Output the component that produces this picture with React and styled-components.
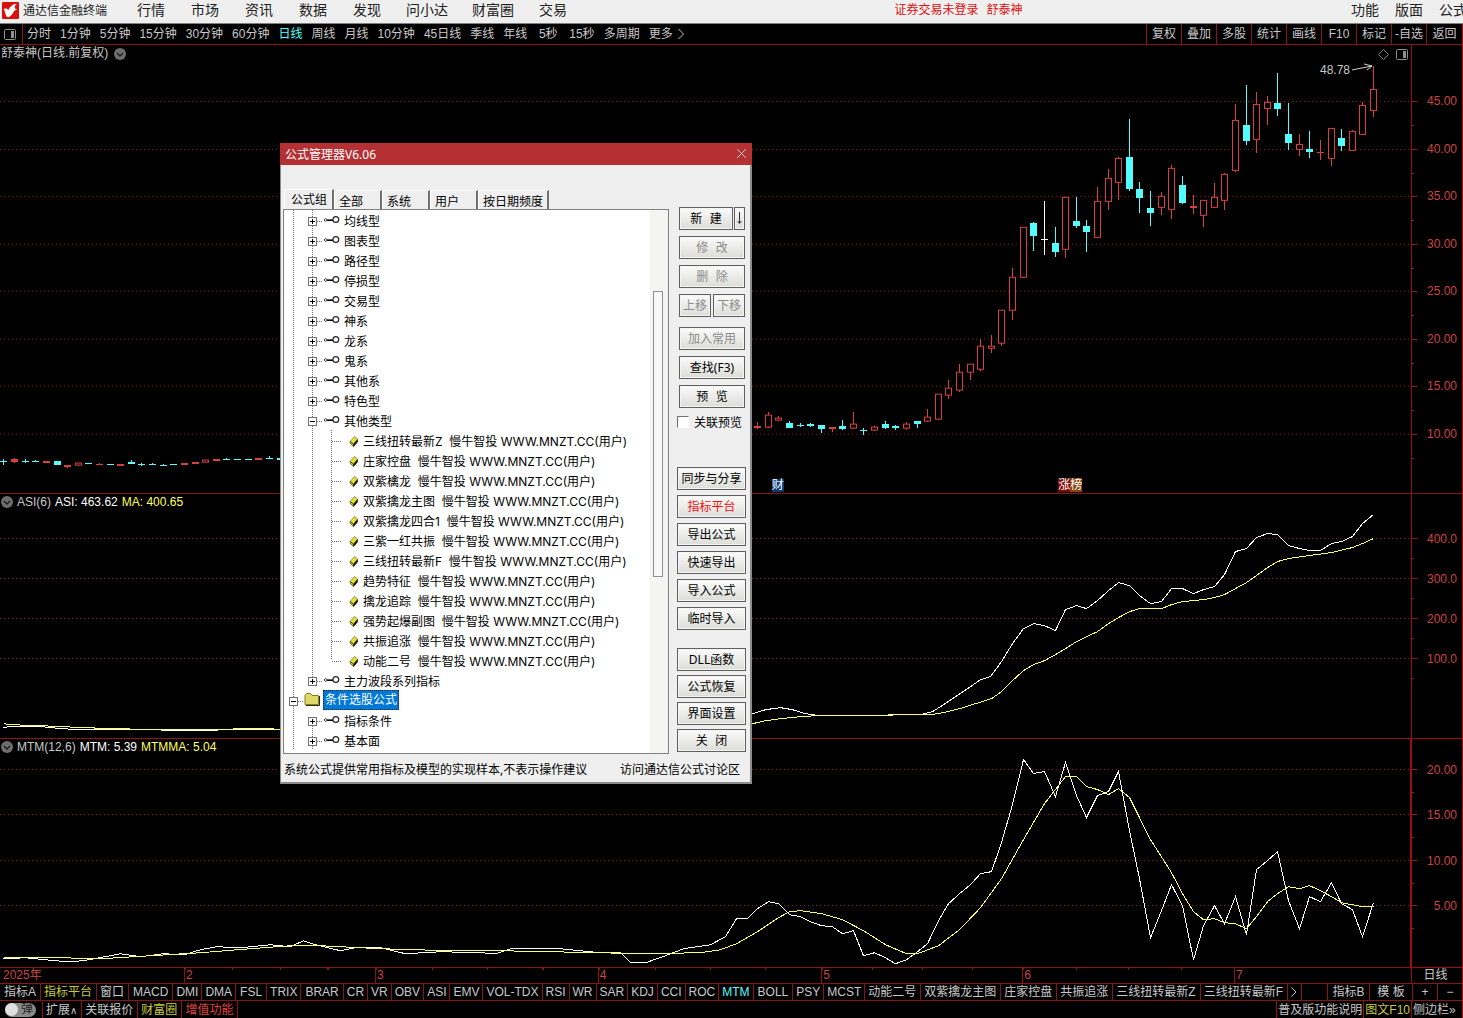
import { useState } from 'react';
import styled, { createGlobalStyle, css } from 'styled-components';

const menus = ['行情', '市场', '资讯', '数据', '发现', '问小达', '财富圈', '交易'];
const rightMenus = ['功能', '版面', '公式'];

const periods = [
  '分时', '1分钟', '5分钟', '15分钟', '30分钟', '60分钟', '日线', '周线', '月线',
  '10分钟', '45日线', '季线', '年线', '5秒', '15秒', '多周期', '更多',
];
const tools = ['复权', '叠加', '多股', '统计', '画线', 'F10', '标记', '-自选', '返回'];

const months = [
  { label: '2025年', days: 183 },
  { label: '2', days: 191, ticks: true },
  { label: '3', days: 223, ticks: true },
  { label: '4', days: 224, ticks: true },
  { label: '5', days: 201, ticks: true },
  { label: '6', days: 212, ticks: true },
  { label: '7', days: 177 },
];

const indicators = [
  'MACD', 'DMI', 'DMA', 'FSL', 'TRIX', 'BRAR', 'CR', 'VR', 'OBV', 'ASI', 'EMV',
  'VOL-TDX', 'RSI', 'WR', 'SAR', 'KDJ', 'CCI', 'ROC', 'MTM', 'BOLL', 'PSY', 'MCST',
];
const roomy = ['MACD', 'FSL', 'BRAR', 'BOLL'];
const customIndicators = ['动能二号', '双紫擒龙主图', '庄家控盘', '共振追涨', '三线扭转最新Z', '三线扭转最新F'];

// x, high, low, body top, body bottom, kind (r hollow, f filled red, c cyan, w white)
const candles = [
  [3, 459, 465, 461, 462, 'c'], [14, 458, 463, 459, 462, 'f'], [25, 459, 463, 461, 462, 'c'],
  [35, 460, 462, 461, 462, 'c'], [46, 461, 463, 461, 463, 'f'], [57, 461, 465, 461, 465, 'c'],
  [67, 465, 468, 465, 467, 'f'], [78, 463, 466, 463, 466, 'r'], [88, 463, 464, 463, 464, 'c'],
  [99, 463, 465, 464, 465, 'f'], [110, 464, 465, 464, 465, 'c'], [120, 464, 466, 464, 466, 'f'],
  [131, 460, 464, 462, 464, 'c'], [141, 463, 466, 464, 465, 'c'], [152, 463, 465, 464, 465, 'c'],
  [163, 464, 466, 465, 466, 'c'], [173, 464, 465, 464, 465, 'c'], [184, 463, 465, 463, 465, 'f'],
  [195, 462, 464, 462, 464, 'f'], [205, 460, 463, 460, 463, 'r'], [216, 459, 461, 459, 461, 'f'],
  [226, 458, 460, 459, 460, 'c'], [237, 459, 460, 459, 460, 'c'], [248, 459, 460, 459, 460, 'c'],
  [258, 458, 460, 458, 460, 'f'], [269, 456, 459, 458, 459, 'c'], [280, 458, 460, 458, 460, 'c'],
  [757, 422, 429, 426, 428, 'f'], [768, 412, 428, 415, 428, 'r'], [778, 416, 421, 418, 421, 'r'],
  [789, 421, 428, 423, 428, 'c'], [800, 423, 427, 425, 426, 'c'], [810, 423, 427, 424, 426, 'c'],
  [821, 425, 433, 425, 429, 'c'], [832, 427, 432, 427, 429, 'f'], [842, 420, 430, 426, 429, 'c'],
  [853, 412, 429, 424, 429, 'r'], [863, 428, 435, 430, 431, 'c'], [874, 426, 431, 427, 431, 'r'],
  [885, 421, 429, 424, 428, 'c'], [895, 425, 430, 426, 428, 'c'], [906, 422, 430, 424, 429, 'r'],
  [917, 421, 428, 421, 424, 'c'], [927, 409, 422, 417, 422, 'r'], [938, 394, 420, 394, 420, 'r'],
  [948, 380, 399, 388, 396, 'r'], [959, 364, 392, 372, 391, 'r'], [970, 364, 380, 364, 373, 'r'],
  [980, 339, 371, 346, 370, 'r'], [991, 335, 353, 346, 349, 'r'], [1001, 310, 346, 310, 344, 'r'],
  [1012, 268, 320, 277, 311, 'r'], [1023, 227, 278, 227, 278, 'r'], [1033, 222, 251, 223, 236, 'c'],
  [1044, 201, 255, 239, 240, 'w'], [1055, 227, 257, 243, 252, 'c'], [1065, 197, 258, 197, 250, 'r'],
  [1076, 197, 228, 221, 226, 'c'], [1086, 220, 252, 226, 232, 'c'], [1097, 187, 238, 201, 238, 'r'],
  [1108, 169, 210, 178, 202, 'r'], [1118, 157, 200, 158, 183, 'r'], [1129, 119, 191, 157, 189, 'c'],
  [1139, 182, 213, 189, 198, 'c'], [1150, 191, 226, 208, 213, 'c'], [1161, 192, 215, 196, 208, 'r'],
  [1171, 165, 219, 168, 210, 'r'], [1182, 176, 204, 185, 203, 'c'], [1193, 195, 214, 206, 208, 'f'],
  [1203, 200, 227, 200, 216, 'r'], [1214, 183, 208, 197, 208, 'r'], [1224, 173, 210, 174, 201, 'r'],
  [1235, 104, 172, 120, 171, 'r'], [1246, 85, 145, 125, 141, 'c'], [1256, 92, 153, 104, 140, 'r'],
  [1267, 96, 125, 102, 109, 'r'], [1277, 73, 116, 103, 109, 'c'], [1288, 103, 150, 134, 143, 'c'],
  [1299, 134, 156, 144, 150, 'r'], [1309, 131, 158, 149, 152, 'c'], [1320, 140, 160, 152, 153, 'f'],
  [1331, 128, 166, 128, 159, 'r'], [1341, 129, 151, 138, 146, 'c'], [1352, 130, 151, 131, 151, 'r'],
  [1362, 102, 135, 105, 135, 'r'], [1373, 66, 117, 89, 111, 'r'],
];

const asiLine =
  '3,727 8,726 41,726 62,728 80,729 147,729 190,730 230,729 280,729 752,713 765,709 780,707 792,709 805,713 820,715 920,714 932,711 943,704 955,696 970,686 980,679 990,676 1001,661 1012,643 1023,628 1033,623 1044,625 1055,630 1065,609 1076,605 1086,608 1097,600 1108,590 1118,582 1129,585 1139,595 1150,603 1161,601 1171,588 1182,588 1193,593 1203,589 1214,586 1224,574 1235,551 1246,548 1256,537 1267,533 1277,534 1288,545 1299,548 1309,550 1320,550 1331,543 1341,541 1352,536 1362,523 1373,514';
const asiAvg =
  '3,723 10,724 41,725 84,727 116,728 158,729 210,729 243,728 270,728 280,729 752,723 765,720 780,718 800,716 815,715 930,714 943,712 959,708 975,703 991,698 1001,691 1012,680 1023,670 1033,664 1044,660 1055,654 1065,648 1076,641 1086,636 1097,631 1108,623 1118,617 1129,611 1139,608 1161,608 1171,604 1182,601 1203,599 1214,597 1224,594 1235,588 1246,582 1256,575 1267,567 1277,561 1288,558 1309,555 1331,552 1352,547 1362,543 1373,538';
const mtmLine =
  '3,958 25,957 45,959 67,961 83,960 99,957 120,953 140,956 163,953 184,954 200,949 216,946 240,947 270,944 290,946 303,940 315,944 340,950 355,947 380,947 405,953 440,951 480,952 495,953 510,948 560,948 600,952 620,952 630,962 645,962 665,955 683,948 710,944 725,936 736,918 747,918 757,908 768,901 778,903 789,914 800,916 810,921 821,925 832,926 842,933 853,930 863,955 874,952 885,957 895,963 906,959 917,951 927,943 938,920 948,903 959,893 970,884 980,873 991,871 1001,842 1012,804 1023,759 1033,773 1044,771 1055,796 1065,762 1076,795 1086,817 1097,795 1108,791 1118,771 1129,830 1139,878 1150,937 1161,910 1171,884 1182,905 1193,959 1203,925 1214,905 1224,923 1235,896 1246,934 1256,869 1267,860 1277,851 1288,900 1299,928 1309,896 1320,901 1331,882 1341,903 1352,909 1362,936 1373,902';
const mtmAvg =
  '3,957 60,957 100,958 150,955 200,952 250,948 290,945 320,945 380,948 450,950 500,950 600,952 640,953 700,952 720,949 736,943 757,931 778,917 789,911 800,910 821,913 842,919 863,930 885,944 906,953 917,953 938,945 959,929 980,907 1001,878 1023,839 1044,803 1065,776 1076,776 1086,786 1097,789 1108,794 1118,788 1129,797 1139,817 1150,839 1171,872 1182,893 1193,911 1203,919 1214,918 1224,922 1235,923 1246,928 1256,916 1267,901 1277,893 1288,886 1299,888 1309,885 1320,890 1331,896 1341,902 1362,906 1373,906';

const priceTicks = [
  [101, '45.00'], [149, '40.00'], [196, '35.00'], [244, '30.00'],
  [291, '25.00'], [339, '20.00'], [386, '15.00'], [434, '10.00'],
];
const asiTicks = [[538, '400.0'], [578, '300.0'], [618, '200.0'], [658, '100.0']];
const mtmTicks = [[769, '20.00'], [814, '15.00'], [860, '10.00'], [905, '5.00']];

const tabs = ['公式组', '全部', '系统', '用户', '按日期频度'];
const groups = [
  '均线型', '图表型', '路径型', '停损型', '交易型', '神系', '龙系', '鬼系', '其他系', '特色型',
];
const formulas = [
  '三线扭转最新Z', '庄家控盘', '双紫檎龙', '双紫擒龙主图', '双紫擒龙四合1', '三紫一红共振',
  '三线扭转最新F', '趋势特征', '擒龙追踪', '强势起爆副图', '共振追涨', '动能二号',
];

export default function App() {
  return (
    <>
      <GlobalStyle />
      <Screen>
        <MenuBar>
          <Logo />
          <Brand>通达信金融终端</Brand>
          {menus.map((m) => (
            <MenuItem key={m} $wide={m.length > 2}>{m}</MenuItem>
          ))}
          <Notice>
            <span>证券交易未登录</span>
            <span>舒泰神</span>
          </Notice>
          <RightMenus>
            {rightMenus.map((m) => (
              <RightMenu key={m}>{m}</RightMenu>
            ))}
          </RightMenus>
        </MenuBar>
        <Workspace>
          <PeriodBar />
          <Panel $weight={449}>
            <Plot>
              <Chart viewBox="0 45 1411 448">
                <Grid ticks={priceTicks} />
                {candles.map((c) => (
                  <Candle key={c[0]} data={c} />
                ))}
                <path d="M1352 70 L1372 66 M1364 64 L1372 66 L1367 70" stroke="#d0d0d0" fill="none" />
              </Chart>
              <PlotTitle $gap={6}>
                舒泰神(日线.前复权)
                <ChevronDot />
              </PlotTitle>
              <PlotTools>
                <svg width="11" height="11" viewBox="0 0 11 11">
                  <path d="M5.5 .5 10.5 5.5 5.5 10.5 .5 5.5Z" fill="none" stroke="#808080" />
                </svg>
                <SideIcon />
              </PlotTools>
              <PeakPrice>48.78</PeakPrice>
              <Mark $at="54.7%" $bg="#0c3c74">财</Mark>
              <Mark $at="75%" $bg="#7c0808">
                涨<Rank>榜</Rank>
              </Mark>
            </Plot>
            <Axis ticks={priceTicks} top={45} height={448} />
          </Panel>
          <Panel $weight={245}>
            <Plot>
              <Chart viewBox="0 494 1411 244">
                <Grid ticks={asiTicks} />
                <Line points={asiLine} stroke="#fff" />
                <Line points={asiAvg} stroke="#ffff60" />
              </Chart>
              <PlotTitle $gap={4}>
                <ChevronDot />
                ASI(6)
                <White>ASI: 463.62</White>
                <Yellow>MA: 400.65</Yellow>
              </PlotTitle>
            </Plot>
            <Axis ticks={asiTicks} top={494} height={244} />
          </Panel>
          <Panel $weight={229}>
            <Plot>
              <Chart viewBox="0 739 1411 228">
                <Grid ticks={mtmTicks} />
                <Line points={mtmLine} stroke="#fff" />
                <Line points={mtmAvg} stroke="#ffff60" />
              </Chart>
              <PlotTitle $gap={4}>
                <ChevronDot />
                MTM(12,6)
                <White>MTM: 5.39</White>
                <Yellow>MTMMA: 5.04</Yellow>
              </PlotTitle>
            </Plot>
            <Axis ticks={mtmTicks} top={739} height={228} active />
          </Panel>
          <TimeAxis>
            <Months>
              {months.map((m) => (
                <Month key={m.label} $days={m.days} $ticks={m.ticks}>{m.label}</Month>
              ))}
            </Months>
            <PeriodName>日线</PeriodName>
          </TimeAxis>
          <IndicatorBar />
          <StatusBar>
            <ToggleCell>
              <Toggle>
                <Knob />弹
              </Toggle>
            </ToggleCell>
            <StatusItem>扩展<Caret>∧</Caret></StatusItem>
            <StatusItem>关联报价</StatusItem>
            <StatusItem $color="#c8c83c">财富圈</StatusItem>
            <StatusItem $color="#e04040">增值功能</StatusItem>
            <Fill />
            <StatusItem $tight>普及版功能说明</StatusItem>
            <StatusItem $tight $color="#c8c83c">图文F10</StatusItem>
            <SideToggle>侧边栏»</SideToggle>
          </StatusBar>
        </Workspace>
        <FormulaManager />
      </Screen>
    </>
  );
}

function Logo() {
  return (
    <svg width="18" height="18" viewBox="0 0 18 18">
      <rect x="0" y="0" width="17" height="17" rx="1" fill="#d8100c" />
      <path d="M1.500 7C3.500 6 5.500 6.500 6.300 8.200C8 4 11 2.200 15 1.800C12.500 3.500 12 5.500 13.500 7L15.200 7.600C10.500 8.500 11.500 13.500 6.500 15.200C3 15 3.800 9.500 1.500 7Z" fill="#fff" />
    </svg>
  );
}

function SideIcon() {
  return (
    <svg width="12" height="11" viewBox="0 0 12 11">
      <rect x="0.5" y="0.5" width="11" height="10" rx="1" fill="none" stroke="#909090" />
      <rect x="7" y="2" width="3" height="7" fill="#909090" />
    </svg>
  );
}

function ChevronDot() {
  return (
    <svg width="12" height="12" viewBox="0 0 12 12">
      <circle cx="6" cy="6" r="6" fill="#6e6e6e" />
      <path d="M3 5 6 8 9 5" fill="none" stroke="#1c1c1c" strokeWidth="1.4" />
    </svg>
  );
}

function PeriodBar() {
  const [period, setPeriod] = useState('日线');
  return (
    <Toolbar>
      <LayoutButton aria-label="布局">
        <SideIcon />
      </LayoutButton>
      <Periods>
        {periods.map((p) => (
          <Period key={p} $active={p === period} onClick={() => setPeriod(p)}>{p}</Period>
        ))}
        <svg width="8" height="12" viewBox="0 0 8 12">
          <path d="M1.500 1 6.500 6 1.500 11" fill="none" stroke="#c0c0c0" />
        </svg>
      </Periods>
      {tools.map((t) => (
        <Tool key={t}>{t}</Tool>
      ))}
    </Toolbar>
  );
}

function Grid({ ticks }) {
  return ticks.map(([y]) => (
    <line key={y} x1="0" x2="1411" y1={y + 0.5} y2={y + 0.5} stroke="#901818" strokeDasharray="1 3" />
  ));
}

function Line({ points, stroke }) {
  return <polyline points={points} fill="none" stroke={stroke} transform="translate(0.5 0.5)" />;
}

function Candle({ data }) {
  const [x, high, low, top, bottom, kind] = data;
  const color = { r: '#d84040', f: '#d84040', c: '#54fcfc', w: '#fff' }[kind];
  const height = bottom - top;
  return (
    <g fill={color}>
      <rect x={x} y={high} width="1" height={low - high} />
      {kind === 'r' ? (
        <rect x={x - 2.5} y={top + 0.5} width="6" height={height - 1} fill="#000" stroke={color} />
      ) : (
        <rect x={x - 3} y={top} width="7" height={height} />
      )}
    </g>
  );
}

function Axis({ ticks, top, height, active }) {
  const pct = (y) => `${((y - top + 0.5) / height) * 100}%`;
  const half = (ticks[1][0] - ticks[0][0]) / 2;
  return (
    <AxisBox $active={active}>
      <AxisScale>
        {ticks.map(([y, label]) => (
          <g key={y}>
            <line x1="0" x2="5" y1={pct(y)} y2={pct(y)} stroke="#a01818" />
            <line x1="0" x2="2" y1={pct(y + half)} y2={pct(y + half)} stroke="#a01818" />
            <text x="45" y={pct(y)} dy="4" textAnchor="end">{label}</text>
          </g>
        ))}
      </AxisScale>
    </AxisBox>
  );
}

function IndicatorBar() {
  const [current, setCurrent] = useState('MTM');
  return (
    <Indicators>
      <Indicator $zh $roomy>指标A</Indicator>
      <Indicator $zh $color="#c8c83c">指标平台</Indicator>
      <Indicator $zh>窗口</Indicator>
      {indicators.map((name) => (
        <Indicator
          key={name}
          $roomy={roomy.includes(name)}
          $color={name === current ? '#54fcfc' : undefined}
          onClick={() => setCurrent(name)}
        >
          {name}
        </Indicator>
      ))}
      {customIndicators.map((name) => (
        <Indicator key={name} $zh>{name}</Indicator>
      ))}
      <Indicator $zh aria-label="更多指标">
        <svg width="6" height="10" viewBox="0 0 6 10">
          <path d="M.5 .5 5 5 .5 9.500" fill="none" stroke="#c0c0c0" />
        </svg>
      </Indicator>
      <Fill />
      <EndCell $w={42}>指标B</EndCell>
      <EndCell $w={43}>模 板</EndCell>
      <EndCell $w={25}>+</EndCell>
      <EndCell $w={25}>−</EndCell>
    </Indicators>
  );
}

function Guide({ box, up = true, down = true, elbow }) {
  return (
    <GuideCell viewBox="0 0 19 20">
      <g stroke="#707070" strokeDasharray="1 1">
        {up && <path d="M9.500 0V10" />}
        {down && <path d="M9.500 10V20" />}
        {(box || elbow) && <path d="M10 11.500H19" />}
      </g>
      {box && (
        <g stroke="#000">
          <rect x="5.500" y="7.500" width="8" height="8" fill="#fff" stroke="#707070" />
          <path d="M7 11.500H12" />
          {box === '+' && <path d="M9.500 9V14" />}
        </g>
      )}
    </GuideCell>
  );
}

function Group({ name, open, first, last }) {
  return (
    <TreeRow role="treeitem" aria-expanded={!!open}>
      <Guide />
      <Guide box={open ? '-' : '+'} up={!first} down={!last} />
      <NodeIcon viewBox="0 0 22 20">
        <path d="M5 10.200H11" stroke="#000" strokeWidth="1.600" />
        <circle cx="3.700" cy="10" r="1.300" fill="#fff" stroke="#444" />
        <circle cx="13.800" cy="9.500" r="2.900" fill="#fff" stroke="#222" strokeWidth="1.200" />
      </NodeIcon>
      {name}
    </TreeRow>
  );
}

function Formula({ name, last }) {
  return (
    <TreeRow role="treeitem">
      <Guide />
      <Guide />
      <Guide elbow down={!last} />
      <NodeIcon viewBox="0 0 22 20">
        <path d="M9.200 11.500 13.500 6.500 16.500 9 12.500 14Z" fill="#e8e040" stroke="#707010" strokeWidth="0.700" />
        <path d="M9.200 11.500 12.500 14 12.500 16.500 9.200 13.500Z" fill="#c8c030" stroke="#404000" strokeWidth="0.700" />
        <path d="M12.500 14 16.800 9V12L12.500 17Z" fill="#101000" />
      </NodeIcon>
      {`${name}  慢牛智投 WWW.MNZT.CC(用户)`}
    </TreeRow>
  );
}

function FormulaManager() {
  const [tab, setTab] = useState('公式组');
  return (
    <Dialog role="dialog" aria-label="公式管理器">
      <TitleBar>
        公式管理器V6.06
        <CloseButton aria-label="关闭窗口">
          <svg width="11" height="11" viewBox="0 0 11 11">
            <path d="M1 1 10 10M10 1 1 10" stroke="#f0d0d0" />
          </svg>
        </CloseButton>
      </TitleBar>
      <DialogBody>
        <Browser>
          <Tabs role="tablist">
            {tabs.map((t) => (
              <Tab key={t} role="tab" $active={t === tab} onClick={() => setTab(t)}>{t}</Tab>
            ))}
          </Tabs>
          <TreeBox>
            <Tree role="tree">
              {groups.map((g) => (
                <Group key={g} name={g} />
              ))}
              <Group name="其他类型" open />
              {formulas.map((f, i) => (
                <Formula key={f} name={f} last={i === formulas.length - 1} />
              ))}
              <Group name="主力波段系列指标" last />
              <TreeRow role="treeitem" aria-expanded>
                <Guide box="-" />
                <FolderIcon viewBox="0 0 19 20">
                  <path d="M2 5.500 3.500 3.500H7.500L9 5.500H15.500V14.500H2Z" fill="#e0d868" stroke="#808020" />
                  <path d="M3 15.500H16.500V6" fill="none" stroke="#303010" />
                </FolderIcon>
                <Selected>条件选股公式</Selected>
              </TreeRow>
              <Group name="指标条件" first />
              <Group name="基本面" />
            </Tree>
            <Scrollbar>
              <Thumb />
            </Scrollbar>
          </TreeBox>
        </Browser>
        <Actions>
          <ButtonGroup $gap={6}>
            <Pair>
              <WinButton $spaced>新  建</WinButton>
              <DropButton aria-label="更多新建">
                <svg width="7" height="13" viewBox="0 0 7 13">
                  <path d="M3.500 0V11M1.500 9 3.500 11.500 5.500 9" fill="none" stroke="#333" />
                </svg>
              </DropButton>
            </Pair>
            <WinButton $spaced disabled>修  改</WinButton>
            <WinButton $spaced disabled>删  除</WinButton>
            <Pair $gap={2}>
              <WinButton disabled>上移</WinButton>
              <WinButton disabled>下移</WinButton>
            </Pair>
          </ButtonGroup>
          <ButtonGroup $gap={6} $top={10}>
            <WinButton disabled>加入常用</WinButton>
            <WinButton>查找(F3)</WinButton>
            <WinButton $spaced>预  览</WinButton>
          </ButtonGroup>
          <CheckLabel>
            <Check type="checkbox" />
            关联预览
          </CheckLabel>
          <Fill />
          <ButtonGroup $gap={5} $wide>
            <WinButton>同步与分享</WinButton>
            <WinButton $red>指标平台</WinButton>
            <WinButton>导出公式</WinButton>
            <WinButton>快速导出</WinButton>
            <WinButton>导入公式</WinButton>
            <WinButton>临时导入</WinButton>
          </ButtonGroup>
          <ButtonGroup $gap={4} $top={18} $wide>
            <WinButton>DLL函数</WinButton>
            <WinButton>公式恢复</WinButton>
            <WinButton>界面设置</WinButton>
            <WinButton $spaced>关  闭</WinButton>
          </ButtonGroup>
        </Actions>
      </DialogBody>
      <DialogFooter>
        <span>系统公式提供常用指标及模型的实现样本,不表示操作建议</span>
        <ForumLink href="#forum">访问通达信公式讨论区</ForumLink>
      </DialogFooter>
    </Dialog>
  );
}

const GlobalStyle = createGlobalStyle`
  * {
    box-sizing: border-box;
  }

  body {
    margin: 0;
    background: #000;
    font: 12px/15px 'Liberation Sans', 'Noto Sans CJK SC', sans-serif;
  }

  button, input {
    font: inherit;
    color: inherit;
    margin: 0;
  }

  button {
    border: 0;
    padding: 0;
    background: none;
    white-space: pre;
  }

  svg {
    flex: none;
    display: block;
  }
`;

const line = '1px solid #8c1414';

const Screen = styled.div`
  position: relative;
  display: flex;
  flex-direction: column;
  height: 100vh;
  overflow: hidden;
  color: #c8c8c8;
`;

const MenuBar = styled.header`
  flex: none;
  display: flex;
  align-items: center;
  height: 24px;
  padding: 0 0 2px 2px;
  overflow: hidden;
  background: #efefef;
  border-bottom: 1px solid #808080;
  color: #222;
`;

const Brand = styled.span`
  width: 104px;
  padding: 2px 0 0 3px;
  white-space: nowrap;
`;

const MenuItem = styled.button`
  flex: none;
  width: ${(p) => (p.$wide ? 66 : 54)}px;
  font-size: 14px;
`;

const Notice = styled.div`
  flex: 1;
  display: flex;
  justify-content: center;
  gap: 8px;
  padding-right: 14px;
  color: #e01010;
  white-space: nowrap;
`;

const RightMenus = styled.nav`
  flex: none;
  display: flex;
  gap: 16px;
  width: 112px;
`;

const RightMenu = styled.button`
  flex: none;
  font-size: 14px;
`;

const Workspace = styled.main`
  flex: 1;
  min-height: 0;
  display: flex;
  flex-direction: column;
  border-right: 1px solid #b40808;
`;

const Toolbar = styled.div`
  flex: none;
  display: flex;
  height: 21px;
  border-bottom: ${line};
`;

const LayoutButton = styled.button`
  width: 23px;
  padding-left: 4px;
  border-right: ${line};
`;

const Periods = styled.div`
  flex: 1;
  display: flex;
  align-items: center;
  gap: 9px;
  padding-left: 4px;

  svg {
    margin-left: -5px;
  }
`;

const Period = styled.button`
  min-width: 24px;
  color: ${(p) => (p.$active ? '#54fcfc' : '#c8c8c8')};
`;

const Tool = styled.button`
  width: 35px;
  border-left: ${line};

  &:last-child {
    width: 36px;
  }
`;

const Panel = styled.section`
  flex: ${(p) => p.$weight} 1 0;
  min-height: 0;
  display: flex;
  border-bottom: ${line};
`;

const Plot = styled.div`
  position: relative;
  flex: 1;
  min-width: 0;
`;

const Chart = styled.svg.attrs({
  preserveAspectRatio: 'none',
  shapeRendering: 'crispEdges',
})`
  width: 100%;
  height: 100%;
`;

const PlotTitle = styled.div`
  position: absolute;
  top: 0;
  left: 1px;
  display: flex;
  align-items: center;
  gap: ${(p) => p.$gap}px;
  height: 17px;
`;

const White = styled.span`
  color: #fff;
`;

const Yellow = styled.span`
  color: #ffff60;
`;

const PlotTools = styled.div`
  position: absolute;
  top: 4px;
  right: 3px;
  display: flex;
  gap: 7px;
`;

const PeakPrice = styled.span`
  position: absolute;
  top: 18px;
  right: 61px;
`;

const Mark = styled.span`
  position: absolute;
  bottom: 1px;
  left: ${(p) => p.$at};
  background: ${(p) => p.$bg};
  color: #fff;
  line-height: 13px;
`;

const Rank = styled.span`
  background: #8c4410;
`;

const AxisBox = styled.div`
  width: 51px;
  border-left: ${line};
  ${(p) =>
    p.$active &&
    css`
      box-shadow: 0 0 0 1px #a80808;
    `}
`;

const AxisScale = styled.svg`
  width: 100%;
  height: 100%;
  fill: #cc4444;
  shape-rendering: crispEdges;
`;

const TimeAxis = styled.div`
  flex: none;
  display: flex;
  height: 16px;
  border-bottom: ${line};
`;

const Months = styled.div`
  flex: 1;
  display: flex;
  color: #cc4444;
`;

const Month = styled.span`
  flex: ${(p) => p.$days} 1 0;
  padding-left: 1px;
  border-left: ${line};
  ${(p) =>
    p.$ticks &&
    css`
      background: repeating-linear-gradient(90deg, #8c1414 0 1px, transparent 1px 25%) 0 0 / 100% 2px no-repeat;
    `}

  &:first-child {
    border-left: 0;
    padding-left: 3px;
  }
`;

const PeriodName = styled.span`
  width: 51px;
  padding-right: 3px;
  border-left: ${line};
  text-align: center;
`;

const Indicators = styled.div`
  flex: none;
  display: flex;
  height: 17px;
  border-bottom: ${line};
`;

const Indicator = styled.button`
  flex: none;
  display: flex;
  align-items: center;
  padding: 0 ${(p) => (p.$zh || p.$roomy ? 4 : 3)}px 0 ${(p) => (p.$roomy ? 4 : 3)}px;
  border-right: ${line};
  color: ${(p) => p.$color || '#c8c8c8'};
`;

const EndCell = styled.button`
  flex: none;
  width: ${(p) => p.$w}px;
  border-left: ${line};
`;

const StatusBar = styled.footer`
  flex: none;
  display: flex;
  height: 17px;
`;

const ToggleCell = styled.div`
  display: flex;
  align-items: center;
  width: 43px;
  padding-left: 5px;
  border-right: ${line};
`;

const Toggle = styled.button`
  display: flex;
  align-items: center;
  gap: 3px;
  width: 31px;
  height: 14px;
  border-radius: 7px;
  background: #8a8a8a;
  color: #222;
`;

const Knob = styled.span`
  width: 13px;
  height: 13px;
  border-radius: 50%;
  background: #e0e0e0;
`;

const StatusItem = styled.button`
  flex: none;
  padding: 1px ${(p) => (p.$tight ? 1 : 4)}px 0 ${(p) => (p.$tight ? 1 : 3)}px;
  border: 0 solid #8c1414;
  border-width: ${(p) => (p.$tight ? '0 0 0 1px' : '0 1px 0 0')};
  color: ${(p) => p.$color || '#c8c8c8'};
`;

const Caret = styled.span`
  font: 10px 'DejaVu Sans', sans-serif;
`;

const SideToggle = styled.button`
  width: 51px;
  padding: 1px 0 0 1px;
  border-left: ${line};
  text-align: left;
`;

const Fill = styled.span`
  flex: 1;
`;

const Dialog = styled.div`
  position: absolute;
  top: 143px;
  left: 280px;
  width: 472px;
  background: #efefef;
  border: solid #8c8c8c;
  border-width: 0 2px 2px 1px;
  color: #000;
  font-family: 'Noto Sans', 'Noto Sans CJK SC', sans-serif;
  line-height: normal;
`;

const TitleBar = styled.div`
  display: flex;
  align-items: center;
  justify-content: space-between;
  height: 22px;
  margin-right: -2px;
  margin-left: -1px;
  padding: 0 5px;
  background: #b43033;
  color: #fff;
`;

const CloseButton = styled.button`
  padding-bottom: 2px;
`;

const DialogBody = styled.div`
  display: flex;
  gap: 8px;
  padding: 24px 4px 0 2px;
`;

const Browser = styled.div`
  width: 386px;
`;

const Tabs = styled.div`
  display: flex;
  align-items: flex-end;
  height: 20px;
  padding-left: 1px;
`;

const Tab = styled.button`
  min-width: 48px;
  height: 19px;
  padding: 3px 4px 0;
  border-top: 1px solid #fff;
  border-left: 1px solid #fff;
  border-right: 2px solid #707070;
  line-height: 16px;
  text-align: left;

  ${(p) =>
    p.$active &&
    css`
      height: 20px;
      padding: 0 5px 0 6px;
    `}
`;

const TreeBox = styled.div`
  display: flex;
  height: 545px;
  border: 1px solid #808080;
  background: #fff;
`;

const Tree = styled.ul`
  flex: 1;
  margin: 0;
  padding: 0;
  list-style: none;
  overflow: hidden;
  font-family: Inter, 'Noto Sans CJK SC', sans-serif;
`;

const TreeRow = styled.li`
  display: flex;
  align-items: center;
  height: 20px;
  white-space: pre;
`;

const GuideCell = styled.svg`
  width: 19px;
  height: 20px;
  shape-rendering: crispEdges;
`;

const NodeIcon = styled.svg`
  width: 22px;
  height: 20px;
`;

const FolderIcon = styled.svg`
  width: 19px;
  height: 20px;
`;

const Selected = styled.span`
  margin-left: 1px;
  padding: 0 1px;
  border: 1px dotted #222;
  background: #0078d7;
  color: #fff;
  line-height: 18px;
`;

const Scrollbar = styled.div`
  width: 18px;
  padding: 81px 4px 0 3px;
  background: #f4f4f2;
`;

const Thumb = styled.div`
  width: 10px;
  height: 286px;
  border: 1px solid #909090;
  background: #f8f8f8;
`;

const Actions = styled.div`
  flex: 1;
  display: flex;
  flex-direction: column;
  padding: 18px 0 2px;
`;

const ButtonGroup = styled.div`
  display: flex;
  flex-direction: column;
  gap: ${(p) => p.$gap}px;
  padding: ${(p) => (p.$wide ? '0' : '0 1px 0 2px')};
  margin-top: ${(p) => p.$top || 0}px;
`;

const Pair = styled.div`
  display: flex;
  gap: ${(p) => p.$gap || 1}px;
`;

const WinButton = styled.button`
  flex: 1 0 auto;
  height: 23px;
  border: 1px solid #606060;
  background: linear-gradient(#fbfbfb, #dcdcd8);
  box-shadow: inset 0 0 0 1px #f4f4f4;
  color: ${(p) => (p.$red ? '#f01010' : '#000')};
  font-family: ${(p) => (p.$spaced ? "'DejaVu Sans', 'Noto Sans CJK SC', sans-serif" : 'inherit')};
  line-height: 20px;

  &:disabled {
    color: #8c8c8c;
  }
`;

const DropButton = styled(WinButton)`
  flex: none;
  width: 11px;
  padding-left: 1px;
`;

const CheckLabel = styled.label`
  display: flex;
  align-items: center;
  gap: 5px;
  height: 28px;
  white-space: nowrap;
`;

const Check = styled.input`
  appearance: none;
  width: 12px;
  height: 12px;
  border: 1px solid #707070;
  border-right-color: #fff;
  border-bottom-color: #fff;
  background: #fff;
`;

const DialogFooter = styled.div`
  display: flex;
  align-items: center;
  justify-content: space-between;
  height: 28px;
  padding: 2px 10px 0 3px;
  white-space: nowrap;
`;

const ForumLink = styled.a`
  color: inherit;
  text-decoration: none;
`;
